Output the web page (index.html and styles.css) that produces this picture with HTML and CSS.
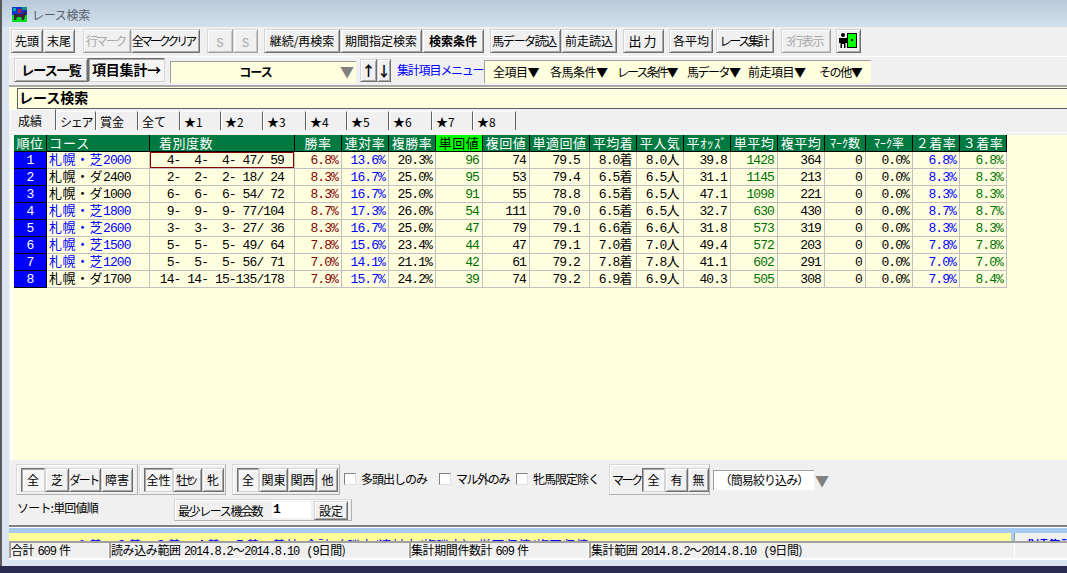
FILE: index.html
```html
<!DOCTYPE html>
<html lang="ja">
<head>
<meta charset="utf-8">
<title>レース検索</title>
<link rel="stylesheet" href="styles.css">
</head>
<body>
<div class="window">
  <header class="titlebar">
    <svg class="appicon" viewBox="0 0 15 15" width="15" height="15"><rect width="15" height="8" fill="#1030d0"/><rect y="8" width="15" height="7" fill="#00e020"/><rect x="1" y="1" width="3" height="3" fill="#00b0a0"/><rect x="10" y="0" width="5" height="3" fill="#109080"/><path d="M2 7h9l2-3 2 1-2 4-1 4h-2l-1-3H5l-1 3H2z" fill="#402040"/><rect x="6" y="2" width="3" height="4" fill="#c02020"/></svg>
    <span class="titletext">レース検索</span>
  </header>
  <div class="client">
    <div class="toolbar">
      <button class="btn w32">先頭</button><button class="btn w32">末尾</button>
      <button class="btn dis w48 t2 ml8">行マーク</button><button class="btn w69 t3">全マーククリア</button>
      <button class="btn dis w26 ml7 ess">S</button><button class="btn dis w25 ess">S</button>
      <button class="btn w76 ml6">継続/再検索</button><button class="btn w82">期間指定検索</button><button class="btn w62 strong">検索条件</button>
      <button class="btn w71 t1 ml6">馬データ読込</button><button class="btn w56">前走読込</button>
      <button class="btn w41 ml6 wide">出力</button>
      <button class="btn w44 ml5">各平均</button>
      <button class="btn w58 t2 ml3">レース集計</button>
      <button class="btn dis w50 t1 ml7">3行表示</button>
      <button class="btn w25 ml5 iconbtn"><svg viewBox="0 0 20 15" width="20" height="15"><circle cx="4" cy="2" r="2" fill="#000"/><path d="M0 5h8v5H6.500v5h-1.500v-4h-2v4H1.500v-5H0z" fill="#000"/><rect x="8.500" y="0.500" width="9" height="14" fill="#00ff00" stroke="#000"/><rect x="12" y="6" width="2" height="2" fill="#000"/></svg></button>
    </div>
    <div class="divider"></div>
    <div class="toolbar2">
      <button class="btn bold w74">レース一覧</button><button class="btn bold w77 pressed">項目集計→</button>
      <div class="combo"><span class="combotext">コース</span><span class="tri">▼</span></div>
      <div class="arrows"><button class="btn w17 arrow">↑</button><button class="btn w14 arrow">↓</button></div>
      <span class="menulink">集計項目メニュー</span>
      <nav class="menubar">
        <span class="mi m1">全項目▼</span><span class="mi m2">各馬条件▼</span><span class="mi m3">レース条件▼</span><span class="mi m4">馬データ▼</span><span class="mi m5">前走項目▼</span><span class="mi m6">その他▼</span>
      </nav>
    </div>
    <div class="titlepanel"><h1 class="pagetitle">レース検索</h1></div>
    <div class="tabs">
      <span class="tab active w44">成績</span><span class="tab w40 tshare">シェア</span><span class="tab w42">賞金</span><span class="tab w42">全て</span><span class="tab w41">★1</span><span class="tab w42">★2</span><span class="tab w43">★3</span><span class="tab w41">★4</span><span class="tab w42">★5</span><span class="tab w43">★6</span><span class="tab w41">★7</span><span class="tab w43">★8</span>
    </div>
    <div class="sheet">
      <table class="grid">
        <colgroup><col class="c33"><col class="c103"><col class="c145"><col class="c47"><col class="c47"><col class="c47"><col class="c47"><col class="c47"><col class="c60"><col class="c47"><col class="c47"><col class="c47"><col class="c47"><col class="c47"><col class="c41"><col class="c47"><col class="c47"><col class="c47"></colgroup>
        <thead>
          <tr><th>順位</th><th class="left">コース</th><th class="indent">着別度数</th><th>勝率</th><th>連対率</th><th>複勝率</th><th class="hot">単回値</th><th>複回値</th><th>単適回値</th><th>平均着</th><th>平人気</th><th>平ｵｯｽﾞ</th><th>単平均</th><th>複平均</th><th class="hk">ﾏｰｸ数</th><th class="hk">ﾏｰｸ率</th><th>２着率</th><th>３着率</th></tr>
        </thead>
        <tbody>
          <tr><td class="rank">1</td><td class="course blue"><span class="kj">札幌・芝</span>2000</td><td class="deg sel"> 4-  4-  4- 47/ 59</td><td class="red">6.8%</td><td class="blue">13.6%</td><td>20.3%</td><td class="green">96</td><td>74</td><td>79.5</td><td>8.0<span class="kj">着</span></td><td>8.0<span class="kj">人</span></td><td>39.8</td><td class="green">1428</td><td>364</td><td>0</td><td>0.0%</td><td class="blue">6.8%</td><td class="green">6.8%</td></tr>
          <tr><td class="rank">2</td><td class="course"><span class="kj">札幌・ダ</span>2400</td><td class="deg"> 2-  2-  2- 18/ 24</td><td class="red">8.3%</td><td class="blue">16.7%</td><td>25.0%</td><td class="green">95</td><td>53</td><td>79.4</td><td>6.5<span class="kj">着</span></td><td>6.5<span class="kj">人</span></td><td>31.1</td><td class="green">1145</td><td>213</td><td>0</td><td>0.0%</td><td class="blue">8.3%</td><td class="green">8.3%</td></tr>
          <tr><td class="rank">3</td><td class="course"><span class="kj">札幌・ダ</span>1000</td><td class="deg"> 6-  6-  6- 54/ 72</td><td class="red">8.3%</td><td class="blue">16.7%</td><td>25.0%</td><td class="green">91</td><td>55</td><td>78.8</td><td>6.5<span class="kj">着</span></td><td>6.5<span class="kj">人</span></td><td>47.1</td><td class="green">1098</td><td>221</td><td>0</td><td>0.0%</td><td class="blue">8.3%</td><td class="green">8.3%</td></tr>
          <tr><td class="rank">4</td><td class="course blue"><span class="kj">札幌・芝</span>1800</td><td class="deg"> 9-  9-  9- 77/104</td><td class="red">8.7%</td><td class="blue">17.3%</td><td>26.0%</td><td class="green">54</td><td>111</td><td>79.0</td><td>6.5<span class="kj">着</span></td><td>6.5<span class="kj">人</span></td><td>32.7</td><td class="green">630</td><td>430</td><td>0</td><td>0.0%</td><td class="blue">8.7%</td><td class="green">8.7%</td></tr>
          <tr><td class="rank">5</td><td class="course blue"><span class="kj">札幌・芝</span>2600</td><td class="deg"> 3-  3-  3- 27/ 36</td><td class="red">8.3%</td><td class="blue">16.7%</td><td>25.0%</td><td class="green">47</td><td>79</td><td>79.1</td><td>6.6<span class="kj">着</span></td><td>6.6<span class="kj">人</span></td><td>31.8</td><td class="green">573</td><td>319</td><td>0</td><td>0.0%</td><td class="blue">8.3%</td><td class="green">8.3%</td></tr>
          <tr><td class="rank">6</td><td class="course blue"><span class="kj">札幌・芝</span>1500</td><td class="deg"> 5-  5-  5- 49/ 64</td><td class="red">7.8%</td><td class="blue">15.6%</td><td>23.4%</td><td class="green">44</td><td>47</td><td>79.1</td><td>7.0<span class="kj">着</span></td><td>7.0<span class="kj">人</span></td><td>49.4</td><td class="green">572</td><td>203</td><td>0</td><td>0.0%</td><td class="blue">7.8%</td><td class="green">7.8%</td></tr>
          <tr><td class="rank">7</td><td class="course blue"><span class="kj">札幌・芝</span>1200</td><td class="deg"> 5-  5-  5- 56/ 71</td><td class="red">7.0%</td><td class="blue">14.1%</td><td>21.1%</td><td class="green">42</td><td>61</td><td>79.2</td><td>7.8<span class="kj">着</span></td><td>7.8<span class="kj">人</span></td><td>41.1</td><td class="green">602</td><td>291</td><td>0</td><td>0.0%</td><td class="blue">7.0%</td><td class="green">7.0%</td></tr>
          <tr><td class="rank">8</td><td class="course"><span class="kj">札幌・ダ</span>1700</td><td class="deg">14- 14- 15-135/178</td><td class="red">7.9%</td><td class="blue">15.7%</td><td>24.2%</td><td class="green">39</td><td>74</td><td>79.2</td><td>6.9<span class="kj">着</span></td><td>6.9<span class="kj">人</span></td><td>40.3</td><td class="green">505</td><td>308</td><td>0</td><td>0.0%</td><td class="blue">7.9%</td><td class="green">8.4%</td></tr>
        </tbody>
      </table>
    </div>
    <div class="filters">
      <div class="frow">
        <div class="group g1"><button class="btn f w24 pressed">全</button><button class="btn f w24">芝</button><button class="btn f w32 t2">ダート</button><button class="btn f w32">障害</button></div>
        <div class="group g2"><button class="btn f w29 pressed">全性</button><button class="btn f w29 t1">牡ｾﾝ</button><button class="btn f w22">牝</button></div>
        <div class="group g3"><button class="btn f w22 pressed">全</button><button class="btn f w29">関東</button><button class="btn f w29">関西</button><button class="btn f w21">他</button></div>
        <label class="check c1"><input type="checkbox" class="cb"><span>多頭出しのみ</span></label>
        <label class="check c2"><input type="checkbox" class="cb"><span>マル外のみ</span></label>
        <label class="check c3"><input type="checkbox" class="cb"><span>牝馬限定除く</span></label>
        <div class="group g4"><span class="marklabel">マーク</span><button class="btn f w23 pressed">全</button><button class="btn f w23">有</button><button class="btn f w21">無</button></div>
        <div class="simple"><span class="simpletext">（簡易絞り込み）</span></div><span class="tri tri2">▼</span>
      </div>
      <div class="frow2">
        <span class="sort">ソート:単回値順</span>
        <div class="group g5"><span class="minlabel">最少レース機会数</span><span class="mininput">1</span><button class="btn f w34">設定</button></div>
      </div>
    </div>
    <div class="rule"></div>
    <div class="stripe"></div>
    <div class="legendrow">
      <div class="legend">１着　２着　３着　４着　５着　着外  全計（ 勝率/連対率/複勝率） 単回収値/複回収値</div>
      <div class="thumb"></div>
      <div class="legendright">成績集計</div>
    </div>
    <footer class="status">
      <span class="panel p1">合計 <span class="mono">609</span> 件</span>
      <span class="panel p2">読み込み範囲 <span class="mono">2014.8.2</span>～<span class="mono">2014.8.10 (9</span>日間)</span>
      <span class="panel p3">集計期間件数計 <span class="mono">609</span> 件</span>
      <span class="panel p4">集計範囲 <span class="mono">2014.8.2</span>～<span class="mono">2014.8.10 (9</span>日間)</span>
    </footer>
    <div class="whiteline"></div>
    <div class="sill"></div>
  </div>
  <div class="taskbar"></div>
</div>
</body>
</html>
```
FILE: styles.css
```css
* { box-sizing: border-box; }
html, body { margin: 0; padding: 0; }
body { width: 1067px; height: 573px; overflow: hidden; font-family: "Noto Sans CJK JP", sans-serif; font-size: 12px; color: #000; }
.window { width: 1067px; height: 573px; display: flex; flex-direction: column; background: #dce6f2; border-left: 2px solid #5a5a5a; }
.titlebar { height: 27px; flex: none; display: flex; align-items: center; padding-left: 10px; background: linear-gradient(#b9c9d9, #d3e1ee); }
.appicon { display: block; margin-top: 2px; }
.titletext { margin-left: 5px; margin-top: 2px; font-size: 12px; color: #555f69; letter-spacing: -.3px; }
.client { flex: 1; min-height: 0; margin-left: 7px; display: flex; flex-direction: column; background: #f0f0f0; }
.taskbar { height: 7px; flex: none; margin-left: -2px; background: #2b2b52; }

.toolbar { height: 29px; flex: none; display: flex; align-items: flex-start; padding: 2px 0 0 2px; }
.divider { height: 1px; flex: none; background: #fff; }
.toolbar2 { height: 28px; flex: none; display: flex; align-items: flex-start; padding: 1px 0 0 5px; }

.btn { display: flex; align-items: center; justify-content: center; height: 24px; flex: none; margin: 0; padding: 0 0 2px; overflow: hidden; white-space: nowrap; font: 12px "Noto Sans CJK JP", sans-serif; color: #000; background: #f0f0f0; border: 1px solid; border-color: #d4d4d4 #707070 #707070 #d4d4d4; box-shadow: inset 1px 1px #fff, inset -1px -1px #a8a8a8; }
.btn.f { padding-bottom: 0; }
.dis { color: #a8a8a8; box-shadow: inset 1px 1px #fff, inset -1px -1px #c8c8c8; border-color: #d8d8d8 #a0a0a0 #a0a0a0 #d8d8d8; }
.ess { align-items: flex-end; padding-bottom: 1px; font-family: "Liberation Mono", monospace; }
.strong { font-weight: 700; }
.wide { letter-spacing: 2px; font-size: 13px; }
.bold { font-weight: 700; font-size: 13px; }
.w74.bold { letter-spacing: -1px; }
.w77.bold { font-size: 14px; letter-spacing: -.2px; }
.t1 { letter-spacing: -1.4px; padding-right: 3px; }
.t2 { letter-spacing: -2.3px; padding-right: 3px; }
.t3 { letter-spacing: -3px; padding-right: 5px; }
.pressed { background: conic-gradient(#fff 25%, #ececec 0 50%, #fff 0 75%, #ececec 0) 0 0 / 2px 2px; border-color: #707070 #d4d4d4 #d4d4d4 #707070; box-shadow: inset 1px 1px #a8a8a8; }
.ml3 { margin-left: 3px; } .ml5 { margin-left: 5px; } .ml6 { margin-left: 6px; } .ml7 { margin-left: 7px; } .ml8 { margin-left: 8px; }
.w14 { width: 14px; } .w17 { width: 17px; } .w21 { width: 21px; } .w22 { width: 22px; } .w23 { width: 23px; } .w24 { width: 24px; } .w25 { width: 25px; } .w26 { width: 26px; } .w29 { width: 29px; } .w32 { width: 32px; } .w34 { width: 34px; }
.w41 { width: 41px; } .w44 { width: 44px; } .w48 { width: 48px; } .w50 { width: 50px; } .w56 { width: 56px; } .w58 { width: 58px; } .w62 { width: 62px; } .w69 { width: 69px; } .w71 { width: 71px; } .w74 { width: 74px; } .w76 { width: 76px; } .w77 { width: 77px; } .w82 { width: 82px; }

.combo { width: 186px; height: 22px; flex: none; margin: 3px 0 0 5px; padding-bottom: 3px; display: flex; align-items: center; background: #ffffe0; border-top: 1px solid #a0a0a0; border-left: 1px solid #a0a0a0; }
.combotext { width: 169px; text-align: center; font-weight: 700; font-size: 12px; letter-spacing: -1px; }
.tri { color: #808080; font-size: 14px; line-height: 1; }
.arrows { display: flex; flex: none; margin-left: 4px; }
.arrow { font-weight: 700; font-size: 14px; height: 23px; margin-top: 1px; }
.menulink { flex: none; width: 84px; margin: 1px 0 0 6px; line-height: 22px; color: #00f; letter-spacing: -1.2px; white-space: nowrap; }
.menubar { flex: none; width: 387px; height: 23px; margin: 2px 0 0 3px; padding-bottom: 2px; display: flex; align-items: center; background: #ffffe0; border-top: 1px solid #a0a0a0; border-left: 1px solid #a0a0a0; white-space: nowrap; }
.mi { flex: none; font-size: 12px; letter-spacing: -.5px; }
.m1 { margin-left: 8px; width: 57px; }
.m2 { width: 67px; }
.m3 { width: 70px; letter-spacing: -2px; }
.m4 { width: 61px; letter-spacing: -1.5px; }
.m5 { width: 71px; }
.m6 { width: 50px; letter-spacing: -1.4px; }

.titlepanel { height: 24px; flex: none; padding: 1px 0 0 8px; background: #ffffe0; border-top: 2px solid #a8a8a8; }
.pagetitle { margin: 0; height: 21px; line-height: 16px; padding-left: 1px; font-size: 14px; font-weight: 700; border: 1px solid #606060; border-right: 0; }

.tabs { height: 24px; flex: none; display: flex; align-items: flex-end; padding: 0 0 2px 1px; border-bottom: 1px solid #fff; }
.tab { height: 19px; flex: none; display: flex; align-items: center; padding-left: 3px; font-size: 12px; border-right: 1px solid #606060; border-top: 1px solid #fff; border-left: 1px solid #fff; white-space: nowrap; }
.tab.active { height: 21px; background: #f0f0f0; padding-left: 7px; }
.tshare { letter-spacing: -1.2px; }
.tab.w44 { width: 46px; } .tab.w40 { width: 40px; } .tab.w42 { width: 42px; } .tab.w41 { width: 41px; } .tab.w43 { width: 43px; }

.sheet { flex: 1; min-height: 0; margin: 2px 0 0 1px; padding: 0 0 0 1px; background: #ffffe0; border-left: 3px solid #fff; }
.grid { width: 993px; table-layout: fixed; border-collapse: separate; border-spacing: 0; font: 13px/14px "Liberation Mono", "Noto Sans CJK JP", monospace; letter-spacing: -.9px; }
.c33 { width: 33px; } .c41 { width: 41px; } .c47 { width: 47px; } .c60 { width: 60px; } .c103 { width: 103px; } .c145 { width: 145px; }
.grid th { height: 17px; padding: 0 0 1px; font: 400 13px/15px "Noto Sans CJK JP", sans-serif; letter-spacing: .5px; color: #fff; background: #007a40; border-right: 1px solid #000; border-bottom: 1px solid #000; white-space: nowrap; }
.grid th.left { text-align: left; padding-left: 2px; letter-spacing: 1px; }
.grid th.indent { text-align: left; padding-left: 9px; }
.grid th.hot { color: #000; background: #00ff00; }
.grid th.hk { letter-spacing: 0; font-size: 12px; }
.grid td { height: 17px; padding: 2px 3px 0 0; text-align: right; white-space: pre; background: #ffffe0; border-right: 1px solid #c0c0c0; border-bottom: 1px solid #c0c0c0; }
.grid td:nth-child(9) { padding-right: 9px; }
.grid td.rank { padding: 2px 0 0; text-align: center; color: #fff; background: #0000ff; border-right-color: #000; border-bottom-color: #000; }
.grid td.course { padding: 2px 0 0 2px; text-align: left; }
.grid td.deg { padding-right: 10px; }
.grid td.sel { box-shadow: inset 0 0 0 1px #800000; }
.kj { font: 13px/10px "Noto Sans CJK JP", sans-serif; letter-spacing: .5px; }
.blue { color: #0000ff; }
.red { color: #800000; }
.green { color: #007000; }

.filters { height: 65px; flex: none; padding: 4px 0 0 7px; }
.frow { display: flex; align-items: flex-start; height: 31px; }
.group { display: flex; align-items: center; height: 31px; flex: none; padding: 0 3px 0 4px; border: 1px solid #d8d8d8; border-right-color: #b0b0b0; border-bottom-color: #b0b0b0; box-shadow: inset 1px 1px #fff; }
.g1 { width: 122px; }
.g2 { width: 87px; margin-left: 1px; }
.g3 { width: 108px; margin-left: 6px; }
.g4 { width: 101px; padding-left: 2px; }
.marklabel { width: 30px; flex: none; letter-spacing: -2.4px; white-space: nowrap; }
.check { display: flex; align-items: center; flex: none; height: 29px; letter-spacing: -1px; white-space: nowrap; }
.cb { appearance: none; width: 12px; height: 12px; margin: 0 5px 0 0; background: #fff; border: 1px solid #808080; border-right-color: #e0e0e0; border-bottom-color: #e0e0e0; }
.c1 { width: 95px; margin-left: 4px; }
.c2 { width: 77px; letter-spacing: -1.4px; }
.c3 { width: 93px; }
.simple { width: 101px; height: 20px; flex: none; margin: 6px 0 0 3px; background: #fff; border-top: 1px solid #a0a0a0; border-left: 1px solid #a0a0a0; text-align: center; line-height: 18px; white-space: nowrap; }
.simpletext { letter-spacing: -.9px; }
.tri2 { margin: 9px 0 0 1px; }
.frow2 { display: flex; align-items: flex-start; height: 22px; margin-top: 4px; }
.sort { width: 157px; flex: none; margin-left: 1px; line-height: 18px; letter-spacing: -.8px; }
.g5 { width: 178px; height: 22px; padding: 0 0 0 3px; }
.g5 .btn { height: 19px; margin-left: 3px; }
.minlabel { width: 90px; flex: none; letter-spacing: -1.4px; white-space: nowrap; }
.mininput { width: 39px; height: 16px; flex: none; padding-left: 1px; background: #fff; font: 700 13px/16px "Liberation Mono", monospace; margin-left: 4px; }

.rule { height: 2px; flex: none; background: #808080; }
.stripe { height: 6px; flex: none; background: #a6caf0; border-top: 1px solid #fff; }
.legendrow { height: 8px; flex: none; display: flex; overflow: hidden; }
.legend { width: 1002px; flex: none; height: 8px; padding-left: 67px; background: #ffff99; color: #00f; font-size: 13px; line-height: 23px; white-space: pre; overflow: hidden; letter-spacing: .1px; }
.thumb { width: 4px; flex: none; background: #a6caf0; border-right: 1px solid #a0a0a0; }
.legendright { flex: 1; padding-left: 7px; background: #f0f0f0; color: #00f; font-size: 13px; font-weight: 700; line-height: 23px; white-space: nowrap; overflow: hidden; }
.status { height: 17px; flex: none; display: flex; border-top: 2px solid #a0a0a0; }
.panel { flex: none; height: 15px; padding-left: 0; line-height: 14px; font-size: 12px; letter-spacing: -.4px; word-spacing: 1px; border-left: 2px solid #a0a0a0; border-right: 1px solid #fff; white-space: nowrap; }
.p1 { width: 100px; }
.p2 { width: 300px; }
.p3 { width: 180px; }
.p4 { width: 426px; }
.mono { font: 12px/14px "Liberation Mono", monospace; letter-spacing: -1.1px; }
.whiteline { height: 2px; flex: none; background: #fff; }
.sill { height: 6px; flex: none; background: #dce6f2; }
```
